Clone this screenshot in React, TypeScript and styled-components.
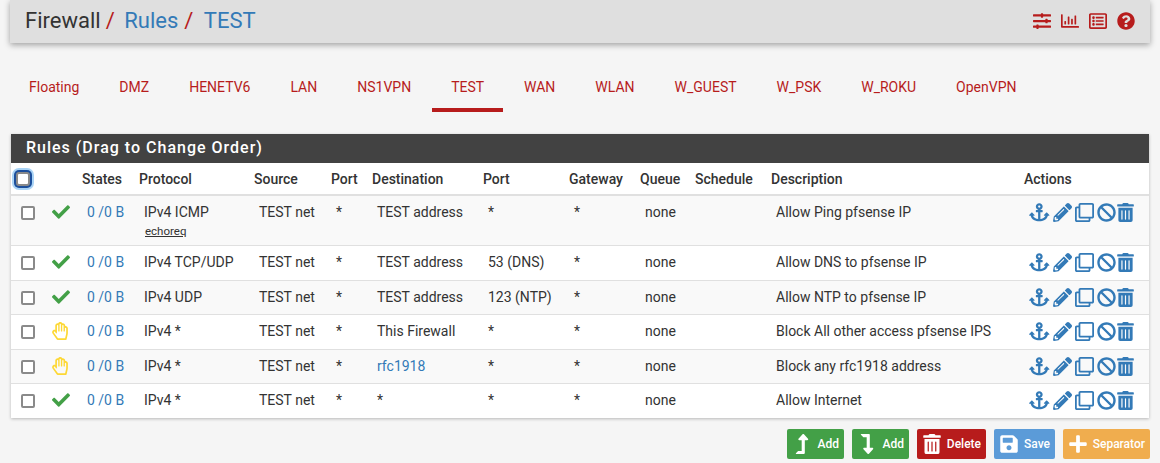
import styled, { createGlobalStyle } from 'styled-components';
import {
    FaAnchor, FaBan, FaCheck, FaLevelDownAlt, FaLevelUpAlt, FaPencilAlt, FaPlus, FaQuestionCircle,
    FaRegChartBar, FaRegClone, FaRegHandPaper, FaRegListAlt, FaSave, FaSlidersH, FaTrashAlt,
} from 'react-icons/fa';

const Global = createGlobalStyle`
    html, body { margin: 0; padding: 0; background: #f5f5f5; }
    body { font-family: Roboto, "Liberation Sans", sans-serif; color: #212121; overflow: hidden; }
`;

const Page = styled.div`
    width: 1160px;
    height: 463px;
    overflow: hidden;
`;

const Header = styled.header`
    margin: 0 10px;
    height: 43px;
    padding: 0 15px;
    box-sizing: border-box;
    background: #dfdfdf;
    box-shadow: 0 2px 6px rgba(0, 0, 0, .35);
    display: flex;
    align-items: center;
    justify-content: space-between;
`;

const Crumbs = styled.div`
    display: flex;
    align-items: baseline;
    font-size: 22px;
    margin-top: -2px;
`;

const Crumb = styled.span<{ $link?: boolean }>`
    color: ${p => (p.$link ? '#337ab7' : '#333')};
`;

const Slash = styled.span`
    color: #b71c1c;
    margin: 0 9.5px 0 5px;
    & ~ & { margin: 0 10.5px 0 6px; }
`;

const HeaderIcons = styled.div`
    display: flex;
    align-items: center;
    gap: 10px;
    color: #b71c1c;
    font-size: 18px;
    margin-top: -1px;
`;

const Tabs = styled.nav`
    display: flex;
    height: 70px;
    margin: 0 9px 21px;
    box-sizing: border-box;
    align-items: flex-start;
`;

const Tab = styled.a<{ $active?: boolean }>`
    padding: 0 19px;
    margin: 24px 1px 0;
    height: 45px;
    line-height: 40px;
    box-sizing: border-box;
    font-size: 14px;
    color: #b71c1c;
    border-bottom: 4px solid ${p => (p.$active ? '#b71c1c' : 'transparent')};
`;

const Panel = styled.section`
    margin: 0 11px;
    width: 1138px;
    background: #fff;
    box-shadow: 0 1px 3px rgba(0, 0, 0, .25);
`;

const PanelTitle = styled.h2`
    margin: 0;
    height: 29px;
    line-height: 28px;
    padding-left: 15px;
    background: #424242;
    color: #fff;
    font-size: 16px;
    font-weight: 500;
    letter-spacing: 1px;
`;

const Table = styled.table`
    width: 1138px;
    table-layout: fixed;
    border-collapse: collapse;
    font-size: 14px;
`;

const Col = styled.col<{ $w: number }>`
    width: ${p => p.$w}px;
`;

const HeadRow = styled.tr`
    height: 32px;
    border-bottom: 2px solid #e0e0e0;
`;

const Th = styled.th`
    padding: 0;
    text-align: left;
    font-size: 14px;
    font-weight: 500;
    white-space: nowrap;
    color: #333;
`;

const Row = styled.tr<{ $tall?: boolean; $odd?: boolean }>`
    height: ${p => (p.$tall ? '50.5px' : '34.5px')};
    background: ${p => (p.$odd ? '#f9f9f9' : '#fff')};
    border-bottom: 1px solid #e0e0e0;
    &:last-child { border-bottom: 0; }
`;

const Td = styled.td`
    padding: 0 0 0 5px;
    vertical-align: top;
    line-height: 33px;
    white-space: nowrap;
    color: #333;
`;

const CheckCell = styled(Td)`
    padding-left: 10px;
`;

const HeadCheckCell = styled(Th)`
    padding-left: 5px;
    line-height: 0;
`;

const Box = styled.span<{ $focus?: boolean }>`
    display: inline-block;
    width: 14px;
    height: 14px;
    box-sizing: border-box;
    border-radius: 2px;
    vertical-align: middle;
    background: #fff;
    border: 2px solid #8a8a8a;
    ${p => p.$focus && 'box-shadow: 0 0 0 2px #1c4f9c, 0 0 0 4px #a9d3f5; border-radius: 3px;'}
`;

const StatusIcon = styled.span<{ $color: string }>`
    display: inline-flex;
    font-size: 18px;
    line-height: 33px;
    vertical-align: top;
    padding-top: 7px;
    color: ${p => p.$color};
`;

const PassIcon = styled(FaCheck)`
    margin-left: 1px;
`;

const Link = styled.a`
    color: #337ab7;
`;

const SubLabel = styled.a`
    display: block;
    margin: -6px 0 0 1px;
    font-size: 11.5px;
    line-height: 16px;
    color: #333;
    text-decoration: underline;
`;

const Actions = styled.div`
    display: flex;
    align-items: center;
    gap: 3px;
    height: 33px;
    color: #337ab7;
    font-size: 19px;
`;

const AnchorIcon = styled(FaAnchor)`
    width: 20.5px;
    height: 20.5px;
`;

const TrashIcon = styled(FaTrashAlt)`
    margin-left: -2.5px;
`;

const Footer = styled.div`
    display: flex;
    justify-content: flex-end;
    gap: 8px;
    margin: 11px 10px 0 0;
`;

const Btn = styled.button<{ $bg: string; $w: number }>`
    width: ${p => p.$w}px;
    height: 30px;
    border: 0;
    border-radius: 2px;
    padding: 0 0 0 5px;
    display: flex;
    align-items: center;
    justify-content: space-between;
    box-sizing: border-box;
    background: ${p => p.$bg};
    color: #fff;
    font-family: inherit;
    font-size: 12px;
    font-weight: 500;
    svg { font-size: 20px; flex: none; }
    span { padding-right: 5px; }
`;

type Rule = {
    icon: 'pass' | 'block';
    protocol: string;
    sub?: string;
    destination: string;
    destLink?: boolean;
    port: string;
    description: string;
};

const rules: Rule[] = [
    { icon: 'pass', protocol: 'IPv4 ICMP', sub: 'echoreq', destination: 'TEST address', port: '*', description: 'Allow Ping pfsense IP' },
    { icon: 'pass', protocol: 'IPv4 TCP/UDP', destination: 'TEST address', port: '53 (DNS)', description: 'Allow DNS to pfsense IP' },
    { icon: 'pass', protocol: 'IPv4 UDP', destination: 'TEST address', port: '123 (NTP)', description: 'Allow NTP to pfsense IP' },
    { icon: 'block', protocol: 'IPv4 *', destination: 'This Firewall', port: '*', description: 'Block All other access pfsense IPS' },
    { icon: 'block', protocol: 'IPv4 *', destination: 'rfc1918', destLink: true, port: '*', description: 'Block any rfc1918 address' },
    { icon: 'pass', protocol: 'IPv4 *', destination: '*', port: '*', description: 'Allow Internet' },
];

const tabs = ['Floating', 'DMZ', 'HENETV6', 'LAN', 'NS1VPN', 'TEST', 'WAN', 'WLAN', 'W_GUEST', 'W_PSK', 'W_ROKU', 'OpenVPN'];
const widths = [35, 36, 57, 115, 77, 41, 111, 86, 71, 55, 76, 253, 125];

const App = () => {
    return (
        <Page>
            <Global />
            <Header>
                <Crumbs>
                    <Crumb>Firewall</Crumb>
                    <Slash>/</Slash>
                    <Crumb $link>Rules</Crumb>
                    <Slash>/</Slash>
                    <Crumb $link>TEST</Crumb>
                </Crumbs>
                <HeaderIcons>
                    <FaSlidersH />
                    <FaRegChartBar />
                    <FaRegListAlt />
                    <FaQuestionCircle />
                </HeaderIcons>
            </Header>
            <Tabs>
                {tabs.map(t => <Tab key={t} $active={t === 'TEST'}>{t}</Tab>)}
            </Tabs>
            <Panel>
                <PanelTitle>Rules (Drag to Change Order)</PanelTitle>
                <Table>
                    <colgroup>
                        {widths.map((w, i) => <Col key={i} $w={w} />)}
                    </colgroup>
                    <thead>
                        <HeadRow>
                            <HeadCheckCell><Box $focus /></HeadCheckCell>
                            <Th />
                            <Th>States</Th>
                            <Th>Protocol</Th>
                            <Th>Source</Th>
                            <Th>Port</Th>
                            <Th>Destination</Th>
                            <Th>Port</Th>
                            <Th>Gateway</Th>
                            <Th>Queue</Th>
                            <Th>Schedule</Th>
                            <Th>Description</Th>
                            <Th>Actions</Th>
                        </HeadRow>
                    </thead>
                    <tbody>
                        {rules.map((r, i) => (
                            <Row key={i} $tall={!!r.sub} $odd={i % 2 === 0}>
                                <CheckCell><Box /></CheckCell>
                                <Td>
                                    {r.icon === 'pass'
                                        ? <StatusIcon $color="#43a047"><PassIcon /></StatusIcon>
                                        : <StatusIcon $color="#fdd835"><FaRegHandPaper /></StatusIcon>}
                                </Td>
                                <Td><Link>0 /0 B</Link></Td>
                                <Td>
                                    {r.protocol}
                                    {r.sub && <SubLabel>{r.sub}</SubLabel>}
                                </Td>
                                <Td>TEST net</Td>
                                <Td>*</Td>
                                <Td>{r.destLink ? <Link>{r.destination}</Link> : r.destination}</Td>
                                <Td>{r.port}</Td>
                                <Td>*</Td>
                                <Td>none</Td>
                                <Td />
                                <Td>{r.description}</Td>
                                <Td>
                                    <Actions>
                                        <AnchorIcon />
                                        <FaPencilAlt />
                                        <FaRegClone />
                                        <FaBan />
                                        <TrashIcon />
                                    </Actions>
                                </Td>
                            </Row>
                        ))}
                    </tbody>
                </Table>
            </Panel>
            <Footer>
                <Btn $bg="#43a047" $w={57}><FaLevelUpAlt /><span>Add</span></Btn>
                <Btn $bg="#43a047" $w={57}><FaLevelDownAlt /><span>Add</span></Btn>
                <Btn $bg="#b71c1c" $w={69}><FaTrashAlt /><span>Delete</span></Btn>
                <Btn $bg="#5b9bd8" $w={61}><FaSave /><span>Save</span></Btn>
                <Btn $bg="#f0ad4e" $w={87}><FaPlus /><span>Separator</span></Btn>
            </Footer>
        </Page>
    );
};

export default App;
